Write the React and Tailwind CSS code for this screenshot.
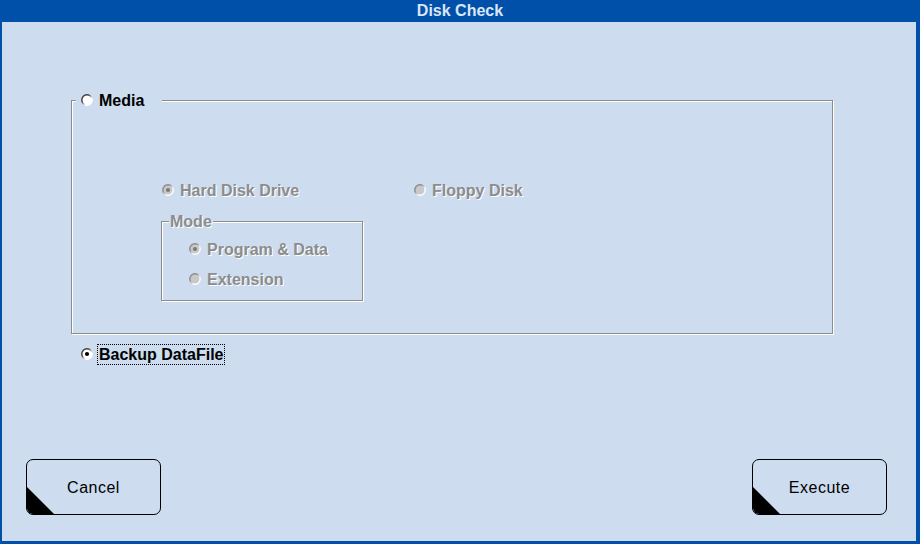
import React, { useId } from "react";

const font = { fontFamily: '"Liberation Sans", Arial, sans-serif' };

const Radio = ({ checked = false, disabled = false }) => {
  const id = useId().replace(/:/g, "");
  return (
    <svg width="12" height="12" viewBox="0 0 12 12" className="shrink-0">
      <defs>
        <linearGradient id={id} x1="0" y1="0" x2="1" y2="1">
          <stop offset="0.35" stopColor={disabled ? "#8a8a8a" : "#3a3a3a"} />
          <stop offset="0.65" stopColor="#ffffff" />
        </linearGradient>
      </defs>
      <circle
        cx="6"
        cy="6"
        r="5.2"
        fill={disabled ? "#c9c9c9" : "#ffffff"}
        stroke={`url(#${id})`}
        strokeWidth="1.4"
      />
      {checked && (
        <circle cx="6" cy="6" r="2.1" fill={disabled ? "#7a7a7a" : "#000000"} />
      )}
    </svg>
  );
};

const Option = ({ label, checked, disabled, focused }) => (
  <div className="flex items-center h-[20px]">
    <Radio checked={checked} disabled={disabled} />
    <span
      className={
        "ml-[4px] px-[1px] text-[16px] font-bold leading-[19px] whitespace-nowrap " +
        (disabled
          ? "text-[#8c8c8c] [text-shadow:1px_1px_0_#ffffff]"
          : "text-black") +
        (focused ? " border border-dotted border-black" : " border border-transparent")
      }
    >
      {label}
    </span>
  </div>
);

const ActionButton = ({ label }) => (
  <button className="relative w-[135px] h-[56px] rounded-[7px] border border-black bg-[#cddcef] overflow-hidden flex items-center justify-center">
    <span className="pt-[2px] text-[16px] tracking-[0.5px] text-black" style={font}>
      {label}
    </span>
    <svg
      width="27"
      height="27"
      viewBox="0 0 27 27"
      className="absolute left-0 bottom-0"
    >
      <polygon points="0,0 27,27 0,27" fill="#000" />
    </svg>
  </button>
);

const etched =
  "border border-[#8c8c8c] shadow-[1px_1px_0_#ffffff,inset_1px_1px_0_#ffffff]";

export default function App() {
  return (
    <div
      className="w-[920px] h-[544px] bg-[#0050aa] flex flex-col"
      style={font}
    >
      <div className="h-[22px] flex items-center justify-center text-[16px] font-bold text-[#d9e6f6]">
        Disk Check
      </div>

      <div className="flex-1 ml-[2px] mr-[4px] mb-[3px] bg-[#cddcef] flex flex-col">
        {/* Media group */}
        <div
          className={`relative mt-[78px] ml-[69px] w-[762px] h-[234px] ${etched}`}
        >
          <div className="absolute left-[4px] -top-[11px] bg-[#cddcef] pl-[5px] pr-[16px]">
            <Option label="Media" />
          </div>

          <div className="pl-[90px] pt-[79px]">
            <div className="flex">
              <div className="w-[252px]">
                <Option label="Hard Disk Drive" checked disabled />
              </div>
              <Option label="Floppy Disk" disabled />
            </div>

            {/* Mode group */}
            <div
              className={`relative mt-[21px] -ml-[1px] w-[202px] h-[80px] ${etched}`}
            >
              <div className="absolute left-[7px] -top-[10px] bg-[#cddcef] px-[1px] text-[16px] font-bold leading-[19px] text-[#8c8c8c] [text-shadow:1px_1px_0_#ffffff]">
                Mode
              </div>
              <div className="pl-[27px] pt-[17px] flex flex-col gap-[10px]">
                <Option label="Program & Data" checked disabled />
                <Option label="Extension" disabled />
              </div>
            </div>
          </div>
        </div>

        <div className="ml-[79px] mt-[10px]">
          <Option label="Backup DataFile" checked focused />
        </div>

        <div className="flex-1" />

        <div className="flex justify-between pl-[24px] pr-[29px] pb-[26px]">
          <ActionButton label="Cancel" />
          <ActionButton label="Execute" />
        </div>
      </div>
    </div>
  );
}
